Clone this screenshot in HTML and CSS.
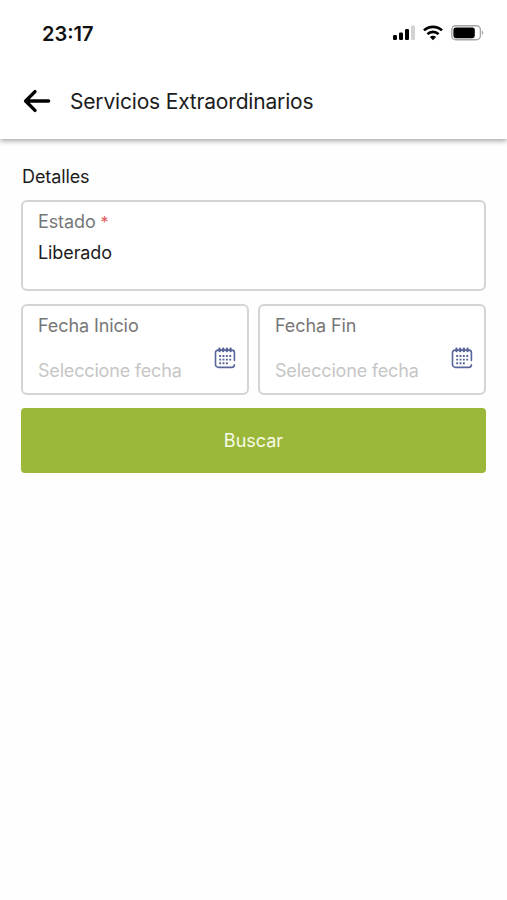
FILE: index.html
```html
<!DOCTYPE html>
<html lang="es">
<head>
  <meta charset="UTF-8">
  <meta name="viewport" content="width=device-width, initial-scale=1.0">
  <title>Servicios Extraordinarios</title>
  <link rel="stylesheet" href="styles.css">
</head>
<body>
  <header>
    <div class="status-bar">
      <span class="time">23:17</span>
      <div class="status-icons">
        <svg width="22" height="16" viewBox="0 0 22 16">
          <rect x="0" y="10" width="4" height="5" rx="1.2"/>
          <rect x="6" y="7.5" width="4" height="7.5" rx="1.2"/>
          <rect x="12" y="4" width="4" height="11" rx="1.2"/>
          <rect x="18" y="0.5" width="4" height="14.5" rx="1.2" fill="#d2d2d2"/>
        </svg>
        <svg class="wifi" width="20" height="16" viewBox="0 0 20 16" fill="none" stroke="#000" stroke-width="2.7">
          <path d="M1 5.4a13 13 0 0 1 18 0"/>
          <path d="M4.4 9.1a8 8 0 0 1 11.2 0"/>
          <path d="M10 15.2l-3.1-3.1a4.4 4.4 0 0 1 6.2 0z" fill="#000" stroke="none"/>
        </svg>
        <svg class="battery" width="33" height="16" viewBox="0 0 33 16">
          <rect x="0.8" y="0.8" width="28.6" height="14" rx="4" fill="none" stroke="#a5a5a5" stroke-width="1.4"/>
          <rect x="2.4" y="2.4" width="21.4" height="10.8" rx="2.4"/>
          <path d="M31 5.6c1.8.8 1.8 3.6 0 4.4z" fill="#a5a5a5"/>
        </svg>
      </div>
    </div>
    <nav class="toolbar">
      <a href="#" class="back" aria-label="Volver">
        <svg width="28" height="24" viewBox="0 0 28 24" fill="none" stroke="#000" stroke-width="3.4" stroke-linecap="round" stroke-linejoin="round">
          <path d="M12 2.6L2.6 12l9.4 9.4M3 12h22.6"/>
        </svg>
      </a>
      <h1>Servicios Extraordinarios</h1>
    </nav>
  </header>

  <main>
    <h2>Detalles</h2>
    <div class="field">
      <label>Estado <span class="required">*</span></label>
      <div class="value">Liberado</div>
    </div>
    <div class="dates">
      <div class="field date">
        <div>
          <label>Fecha Inicio</label>
          <div class="placeholder">Seleccione fecha</div>
        </div>
        <svg class="calendar" width="22" height="22" viewBox="0 0 22 22" fill="none" stroke="#58659a" stroke-width="1.6" stroke-linecap="round">
          <path d="M20.4 13.5V5.6a2.5 2.5 0 0 0-2.5-2.5H4a2.5 2.5 0 0 0-2.5 2.5v11.8a3 3 0 0 0 3 3h13.3a2.6 2.6 0 0 0 2.6-2.6"/>
          <path d="M5.5 1.6v2.6M9.2 1.6v2.6M12.9 1.6v2.6M16.6 1.6v2.6" stroke-width="2.3"/>
          <path d="M5.2 9h12.5M5.2 12.6h12.5M5.2 16.2h9.5" stroke-width="1.9" stroke-linecap="butt" stroke-dasharray="1.9 1.45"/>
        </svg>
      </div>
      <div class="field date">
        <div>
          <label>Fecha Fin</label>
          <div class="placeholder">Seleccione fecha</div>
        </div>
        <svg class="calendar" width="22" height="22" viewBox="0 0 22 22" fill="none" stroke="#58659a" stroke-width="1.6" stroke-linecap="round">
          <path d="M20.4 13.5V5.6a2.5 2.5 0 0 0-2.5-2.5H4a2.5 2.5 0 0 0-2.5 2.5v11.8a3 3 0 0 0 3 3h13.3a2.6 2.6 0 0 0 2.6-2.6"/>
          <path d="M5.5 1.6v2.6M9.2 1.6v2.6M12.9 1.6v2.6M16.6 1.6v2.6" stroke-width="2.3"/>
          <path d="M5.2 9h12.5M5.2 12.6h12.5M5.2 16.2h9.5" stroke-width="1.9" stroke-linecap="butt" stroke-dasharray="1.9 1.45"/>
        </svg>
      </div>
    </div>
    <button>Buscar</button>
  </main>
</body>
</html>
```
FILE: styles.css
```css
* {
  box-sizing: border-box;
}
body {
  font-family: Inter, "Liberation Sans", sans-serif;
  background: #fefefe;
  color: #1c1c1c;
  margin: 0;
  font-size: 18px;
}
header {
  height: 139px;
  background: #fff;
  box-shadow: 0 2px 5px rgba(0, 0, 0, 0.35);
}
.status-bar {
  display: flex;
  justify-content: space-between;
  align-items: center;
  height: 66px;
  padding: 0 23px 0 42px;
}
.time {
  padding-top: 1px;
  font-size: 20px;
  font-weight: 600;
  color: #111;
}
.status-icons {
  display: flex;
  align-items: center;
}
.wifi {
  margin-left: 8px;
}
.battery {
  margin-left: 8px;
}
.toolbar {
  display: flex;
  align-items: center;
  height: 70px;
  padding-left: 23px;
}
.back {
  display: flex;
  margin-right: 19px;
}
h1 {
  margin: 0;
  font-size: 21px;
  font-weight: 400;
  letter-spacing: -0.18px;
}
main {
  padding: 27px 21px 0;
}
h2 {
  margin: 0 0 12px 1px;
  font-size: 18px;
  font-weight: 400;
  line-height: 22px;
  letter-spacing: -0.1px;
}
.field {
  height: 91px;
  padding: 9px 15px;
  border: 2px solid #d4d4d4;
  border-radius: 6px;
  background: #fff;
}
label {
  display: block;
  line-height: 22px;
  letter-spacing: -0.1px;
  color: #777;
}
.required {
  font-size: 16px;
  color: #e05a5a;
}
.value {
  margin-top: 9px;
  line-height: 22px;
  letter-spacing: -0.1px;
}
.dates {
  display: grid;
  grid-template-columns: 1fr 1fr;
  gap: 9px;
  margin: 13px 0;
}
.date {
  display: flex;
  justify-content: space-between;
  padding-right: 11px;
}
.placeholder {
  margin-top: 23px;
  line-height: 22px;
  letter-spacing: -0.18px;
  color: #c6c6c6;
}
.calendar {
  margin-top: 32px;
}
button {
  display: block;
  width: 100%;
  height: 65px;
  border: none;
  border-radius: 4px;
  background: #9bb83a;
  color: #f8fbe9;
  font-family: inherit;
  font-size: 18px;
}
```
